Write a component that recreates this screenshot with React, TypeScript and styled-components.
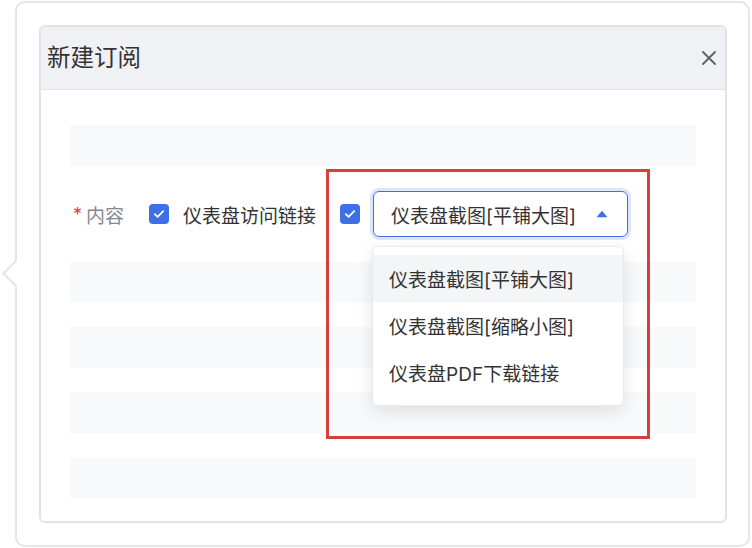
import styled, { createGlobalStyle } from "styled-components";

const GlobalStyle = createGlobalStyle`
  body {
    margin: 0;
    background: #fff;
    font-family: Inter, "Noto Sans CJK SC", sans-serif;
  }
`;

const Popover = styled.div`
  position: relative;
  display: flex;
  box-sizing: border-box;
  width: 735px;
  height: 546px;
  margin: 1px 0 0 15px;
  padding: 22px 21px 22px 22px;
  border: 2px solid #e4e4ea;
  border-radius: 10px;
  background: #fff;

  &::before {
    content: "";
    position: absolute;
    left: -11px;
    top: 261px;
    width: 17px;
    height: 17px;
    background: #fff;
    border-left: 2px solid #e4e4ea;
    border-bottom: 2px solid #e4e4ea;
    transform: rotate(45deg);
  }
`;

const Modal = styled.div`
  flex: 1;
  display: flex;
  flex-direction: column;
  border: 2px solid #e2e2e8;
  border-radius: 6px;
  overflow: hidden;
`;

const Header = styled.div`
  display: flex;
  align-items: center;
  justify-content: space-between;
  box-sizing: border-box;
  height: 63px;
  padding: 0 9px 4px 6px;
  background: #f0f1f5;
  border-bottom: 1px solid #e3e4e9;
`;

const Title = styled.span`
  font-size: 23.5px;
  color: #333;
`;

const CloseBox = styled.span`
  display: inline-flex;
  margin-top: 4px;
`;

const Body = styled.div`
  display: flex;
  flex-direction: column;
  padding: 35px 29px 0;
`;

const Skeleton = styled.div`
  height: 41px;
  background: #f8f9fb;
`;

const SkeletonList = styled.div`
  display: flex;
  flex-direction: column;
  gap: 24px;
`;

const FormRow = styled.div`
  display: flex;
  align-items: center;
  height: 96px;
  padding-left: 3px;
`;

const Required = styled.span`
  color: #e0443b;
  font-size: 18px;
  margin-right: 4px;
`;

const Label = styled.span`
  font-size: 19px;
  color: #86888e;
  margin-right: 25px;
`;

const Checkbox = styled.span<{ $gap: number }>`
  display: inline-flex;
  align-items: center;
  justify-content: center;
  flex-shrink: 0;
  width: 20px;
  height: 20px;
  border-radius: 4px;
  background: #3e6fe6;
  margin-right: ${(p) => p.$gap}px;
`;

const OptionText = styled.span`
  font-size: 19px;
  color: #333;
  margin-right: 24px;
`;

const SelectGroup = styled.div`
  position: relative;
  display: flex;
  align-items: center;
`;

const Select = styled.div`
  display: flex;
  align-items: center;
  justify-content: space-between;
  box-sizing: border-box;
  width: 255px;
  height: 46px;
  padding: 0 19px 0 17px;
  border: 1.5px solid #3d6fe8;
  border-radius: 6px;
  box-shadow: 0 0 0 3px rgba(61, 111, 232, 0.18);
  font-size: 19px;
  color: #333;
`;

const Menu = styled.div`
  position: absolute;
  top: 55px;
  left: 32px;
  width: 252px;
  box-sizing: border-box;
  padding: 8px 0 9px;
  background: #fff;
  border: 1px solid #e8e8ee;
  border-radius: 6px;
  box-shadow: 0 6px 18px rgba(0, 0, 0, 0.1);
`;

const MenuItem = styled.div<{ $active?: boolean }>`
  display: flex;
  align-items: center;
  height: 47px;
  padding-left: 16px;
  font-size: 19px;
  color: #333;
  background: ${(p) => (p.$active ? "#f4f5f7" : "transparent")};
`;

const Annotation = styled.div`
  position: absolute;
  left: -14px;
  top: -22px;
  width: 324px;
  height: 270px;
  box-sizing: border-box;
  border: 3px solid #d6403a;
  pointer-events: none;
`;

const Check = () => (
  <svg width="12" height="10" viewBox="0 0 12 10">
    <path
      d="M1.8 5.2 4.6 7.8 10.2 2.2"
      fill="none"
      stroke="#fff"
      strokeWidth="1.8"
      strokeLinecap="round"
      strokeLinejoin="round"
    />
  </svg>
);

const CloseIcon = () => (
  <svg width="14" height="14" viewBox="0 0 14 14">
    <path
      d="M1 1 13 13 M13 1 1 13"
      stroke="#5f6066"
      strokeWidth="1.8"
      strokeLinecap="round"
    />
  </svg>
);

const ArrowUp = () => (
  <svg width="12" height="8" viewBox="0 0 12 8">
    <path d="M6 0.8 11.5 7.2H0.5Z" fill="#3d6fe8" />
  </svg>
);

const options = ["仪表盘截图[平铺大图]", "仪表盘截图[缩略小图]", "仪表盘PDF下载链接"];

export default function App() {
  return (
    <>
      <GlobalStyle />
      <Popover>
        <Modal>
          <Header>
            <Title>新建订阅</Title>
            <CloseBox>
              <CloseIcon />
            </CloseBox>
          </Header>
          <Body>
            <Skeleton />
            <FormRow>
              <Required>*</Required>
              <Label>内容</Label>
              <Checkbox $gap={14}>
                <Check />
              </Checkbox>
              <OptionText>仪表盘访问链接</OptionText>
              <SelectGroup>
                <Checkbox $gap={13}>
                  <Check />
                </Checkbox>
                <Select>
                  <span>{options[0]}</span>
                  <ArrowUp />
                </Select>
                <Menu>
                  {options.map((o, i) => (
                    <MenuItem key={o} $active={i === 0}>
                      {o}
                    </MenuItem>
                  ))}
                </Menu>
                <Annotation />
              </SelectGroup>
            </FormRow>
            <SkeletonList>
              <Skeleton />
              <Skeleton />
              <Skeleton />
              <Skeleton />
            </SkeletonList>
          </Body>
        </Modal>
      </Popover>
    </>
  );
}
